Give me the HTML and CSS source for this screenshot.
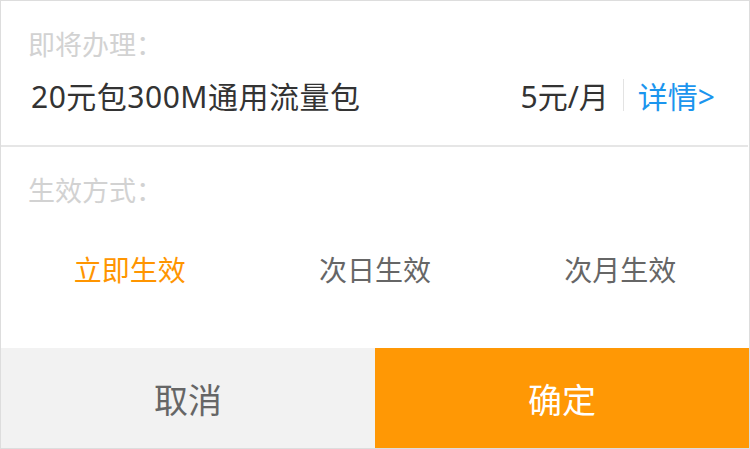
FILE: index.html
```html
<!DOCTYPE html>
<html lang="zh-CN">
<head>
  <meta charset="UTF-8" />
  <meta name="viewport" content="width=device-width, initial-scale=1.0" />
  <title>流量包办理</title>
  <link rel="stylesheet" href="styles.css">
</head>
<body>
  <div class="sheet">
    <div class="order">
      <div class="label">即将办理：</div>
      <div class="order-row">
        <span class="order-name">20元包300M通用流量包</span>
        <div class="order-side">
          <span class="price">5元/月</span>
          <span class="sep"></span>
          <a href="#" class="detail">详情&gt;</a>
        </div>
      </div>
    </div>

    <div class="mode">
      <div class="label">生效方式：</div>
      <div class="options">
        <span class="option active">立即生效</span>
        <span class="option">次日生效</span>
        <span class="option">次月生效</span>
      </div>
    </div>

    <div class="actions">
      <button class="btn btn-cancel">取消</button>
      <button class="btn btn-ok">确定</button>
    </div>
  </div>
</body>
</html>
```

FILE: styles.css
```css
* {
  box-sizing: border-box;
  margin: 0;
  padding: 0;
}

body {
  font-family: "Noto Sans", "Noto Sans CJK SC", sans-serif;
  background: #fff;
  color: #333;
}

.sheet {
  width: 750px;
  height: 449px;
  border: 1px solid #ddd;
  display: flex;
  flex-direction: column;
}

.label {
  font-size: 27px;
  line-height: 30px;
  color: #d2d2d2;
  padding-left: 27px;
}

.order {
  padding: 29px 0 30px;
  border-bottom: 2px solid #e6e6e6;
  margin-right: 1px;
}

.order-row {
  display: flex;
  justify-content: space-between;
  align-items: center;
  margin-top: 15px;
  height: 40px;
  padding: 0 33px 0 30px;
  font-size: 30px;
}

.order-name {
  letter-spacing: 0.5px;
}

.order-side {
  display: flex;
  align-items: center;
}

.price {
  color: #333;
}

.sep {
  width: 1px;
  height: 32px;
  background: #e3e3e3;
  margin: 0 14px;
}

.detail {
  color: #1b95ee;
  text-decoration: none;
}

.mode {
  flex: 1;
  padding-top: 29px;
}

.options {
  display: grid;
  grid-template-columns: repeat(3, 1fr);
  padding: 0 6px;
  margin-top: 44px;
}

.option {
  text-align: center;
  font-size: 28px;
  line-height: 40px;
  color: #666;
}

.option.active {
  color: #ff9500;
}

.actions {
  display: flex;
  height: 100px;
}

.btn {
  flex: 1;
  border: none;
  font-family: inherit;
  font-size: 34px;
  cursor: pointer;
}

.btn-cancel {
  background: #f2f2f2;
  color: #666;
}

.btn-ok {
  background: #ff9805;
  color: #fff;
}
```
